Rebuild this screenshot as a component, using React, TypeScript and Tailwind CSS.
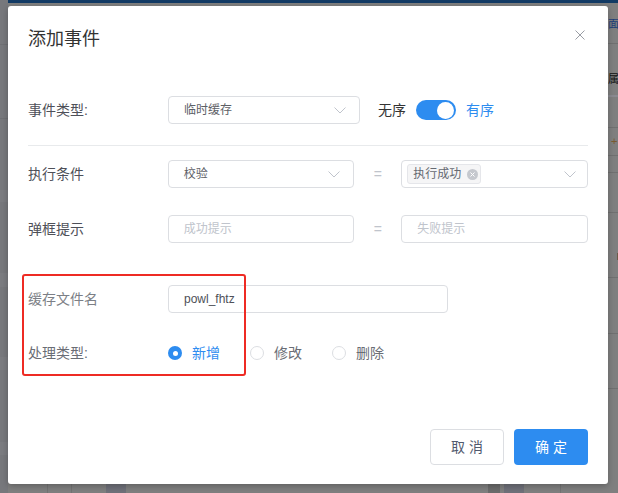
const FONT = { fontFamily: '"Liberation Sans", "Noto Sans CJK SC", sans-serif' };

function Chevron() {
  return (
    <svg width="12" height="7" viewBox="0 0 12 7" fill="none" className="shrink-0">
      <path d="M0.5 0.5 L6 6 L11.5 0.5" stroke="#c0c4cc" strokeWidth="1" />
    </svg>
  );
}

function Select({ width, value, placeholder }: { width: string; value?: string; placeholder?: string }) {
  return (
    <div className={`${width} h-[28px] border border-[#dcdee2] rounded-[4px] flex items-center justify-between pl-[15px] pr-[13px]`}>
      {value ? (
        <span className="text-[12px] leading-none text-[#5d6066]">{value}</span>
      ) : (
        <span className="text-[12px] leading-none text-[#c0c4cc]">{placeholder}</span>
      )}
      <Chevron />
    </div>
  );
}

function Input({ width, value, placeholder }: { width: string; value?: string; placeholder?: string }) {
  return (
    <div className={`${width} h-[28px] border border-[#dcdee2] rounded-[4px] flex items-center pl-[15px]`}>
      {value ? (
        <span className="text-[12px] leading-none text-[#4e5058]">{value}</span>
      ) : (
        <span className="text-[12px] leading-none text-[#c0c4cc]">{placeholder}</span>
      )}
    </div>
  );
}

function Radio({ label, checked }: { label: string; checked?: boolean }) {
  return (
    <div className="flex items-center gap-[10px]">
      {checked ? (
        <span className="w-[14px] h-[14px] rounded-full bg-[#2d8cf0] flex items-center justify-center">
          <span className="w-[5px] h-[5px] rounded-full bg-white" />
        </span>
      ) : (
        <span className="w-[14px] h-[14px] rounded-full border border-[#dcdee2] bg-white" />
      )}
      <span className={`text-[14px] leading-none ${checked ? "text-[#2d8cf0]" : "text-[#6a6d75]"}`}>{label}</span>
    </div>
  );
}

export default function App() {
  return (
    <div className="relative w-[618px] h-[493px] overflow-hidden bg-[#7f7f7f]" style={FONT}>
      {/* page behind the mask */}
      <div className="absolute top-0 left-0 w-full h-[3px] bg-[#123a64]" />
      <div className="absolute left-0 top-0 w-[8px] h-full bg-[#77787c]" />
      <div className="absolute left-0 top-[44px] w-[8px] h-px bg-[#6f7074]" />
      <div className="absolute left-0 top-[118px] w-[8px] h-px bg-[#6f7074]" />
      <div className="absolute left-0 top-[190px] w-[8px] h-[12px] bg-[#7b7c80]" />
      <div className="absolute left-0 top-[273px] w-[8px] h-[14px] bg-[#7b7c80]" />
      <div className="absolute left-0 top-[357px] w-[8px] h-[13px] bg-[#7b7c80]" />
      <div className="absolute left-0 top-[442px] w-[8px] h-[13px] bg-[#7b7c80]" />
      <div className="absolute left-[608px] top-[19px] text-[11px] leading-none text-[#1f3f78]">面</div>
      <div className="absolute left-[608px] top-[43px] w-[10px] h-px bg-[#707070]" />
      <div className="absolute left-[608px] top-[74px] text-[11px] leading-none text-[#111]">属</div>
      <div className="absolute left-[608px] top-[95px] w-[10px] h-[2px] bg-[#8a8a90]" />
      <div className="absolute left-[608px] top-[127px] w-[10px] h-px bg-[#707070]" />
      <div className="absolute left-[611px] top-[136px] text-[11px] leading-none text-[#7a5a30]">+</div>
      <div className="absolute left-[608px] top-[155px] w-[10px] h-px bg-[#707070]" />
      <div className="absolute left-[608px] top-[172px] w-[10px] h-px bg-[#707070]" />
      <div className="absolute left-[608px] top-[212px] w-[10px] h-px bg-[#707070]" />
      <div className="absolute left-[617px] top-[253px] w-[1px] h-[7px] bg-[#6d5a48]" />
      <div className="absolute left-[608px] top-[277px] w-[10px] h-px bg-[#707070]" />
      <div className="absolute left-[608px] top-[333px] w-[10px] h-px bg-[#707070]" />
      <div className="absolute left-[608px] top-[388px] w-[10px] h-px bg-[#707070]" />
      <div className="absolute top-[484px] left-[47px] w-px h-[9px] bg-[#737373]" />
      <div className="absolute top-[484px] left-[71px] w-px h-[9px] bg-[#737373]" />
      <div className="absolute top-[484px] left-[106px] w-[20px] h-[9px] bg-[#6f7079]" />
      <div className="absolute top-[484px] left-[488px] w-[12px] h-[9px] bg-[#6b6b6b]" />
      <div className="absolute top-[484px] left-[504px] w-[20px] h-[9px] bg-[#6f7079]" />
      <div className="absolute top-[484px] left-[560px] w-px h-[9px] bg-[#737373]" />

      {/* modal */}
      <div className="absolute left-[8px] top-[6px] w-[600px] h-[478px] bg-white rounded-[3px] shadow-[0_2px_6px_rgba(0,0,0,0.25)] flex flex-col px-[20px]">
        <div className="pt-[21px] h-[45px] text-[18px] leading-[24px] text-[#333]">添加事件</div>
        <svg className="absolute left-[567px] top-[24px]" width="10" height="10" viewBox="0 0 10 10">
          <path d="M0.5 0.5 L9.5 9.5 M9.5 0.5 L0.5 9.5" stroke="#9a9da4" strokeWidth="1" />
        </svg>

        {/* 事件类型 */}
        <div className="mt-[45px] h-[28px] flex items-center">
          <div className="w-[140px] text-[14px] leading-none text-[#4e5058]">事件类型:</div>
          <Select width="w-[192px]" value="临时缓存" />
          <span className="ml-[18px] text-[14px] leading-none text-[#333]">无序</span>
          <div className="ml-[10px] w-[40px] h-[20px] rounded-full bg-[#2d8cf0] flex items-center justify-end pr-[2px]">
            <span className="w-[17px] h-[17px] rounded-full bg-white" />
          </div>
          <span className="ml-[10px] text-[14px] leading-none text-[#2d8cf0]">有序</span>
        </div>

        <div className="mt-[21px] h-px bg-[#e8eaec]" />

        {/* 执行条件 */}
        <div className="mt-[14px] h-[28px] flex items-center">
          <div className="w-[140px] text-[14px] leading-none text-[#4e5058]">执行条件</div>
          <Select width="w-[187px]" value="校验" />
          <span className="w-[47px] text-center text-[14px] leading-none text-[#c0c4cc]">=</span>
          <div className="w-[187px] h-[28px] border border-[#dcdee2] rounded-[4px] flex items-center justify-between pl-[5px] pr-[11px]">
            <div className="h-[20px] bg-[#f5f5f6] border border-[#e5e6ea] rounded-[3px] flex items-center pl-[5px] pr-[2px] gap-[6px]">
              <span className="text-[12px] leading-none text-[#666a72]">执行成功</span>
              <span className="w-[11px] h-[11px] rounded-full bg-[#c5c8ce] flex items-center justify-center">
                <svg width="5" height="5" viewBox="0 0 5 5">
                  <path d="M0.5 0.5 L4.5 4.5 M4.5 0.5 L0.5 4.5" stroke="#fff" strokeWidth="1" />
                </svg>
              </span>
            </div>
            <Chevron />
          </div>
        </div>

        {/* 弹框提示 */}
        <div className="mt-[27px] h-[28px] flex items-center">
          <div className="w-[140px] text-[14px] leading-none text-[#4e5058]">弹框提示</div>
          <Input width="w-[187px]" placeholder="成功提示" />
          <span className="w-[47px] text-center text-[14px] leading-none text-[#c0c4cc]">=</span>
          <Input width="w-[187px]" placeholder="失败提示" />
        </div>

        {/* 缓存文件名 */}
        <div className="mt-[42px] h-[28px] flex items-center">
          <div className="w-[140px] text-[14px] leading-none text-[#7c7f86]">缓存文件名</div>
          <Input width="w-[280px]" value="powl_fhtz" />
        </div>

        {/* 处理类型 */}
        <div className="mt-[30px] h-[20px] flex items-center">
          <div className="w-[140px] text-[14px] leading-none text-[#6a6d75]">处理类型:</div>
          <div className="flex items-center gap-[30px]">
            <Radio label="新增" checked />
            <Radio label="修改" />
            <Radio label="删除" />
          </div>
        </div>

        <div className="mt-auto mb-[19px] flex justify-end gap-[10px]">
          <button className="w-[74px] h-[36px] rounded-[4px] border border-[#dcdee2] bg-white text-[14px] text-[#515a6e]">
            取 消
          </button>
          <button className="w-[74px] h-[36px] rounded-[4px] bg-[#2d8cf0] text-[14px] text-white">
            确 定
          </button>
        </div>

        {/* annotation */}
        <div className="absolute left-[14px] top-[268px] w-[224px] h-[102px] border-2 border-[#ee2b24] rounded-[3px]" />
      </div>
    </div>
  );
}
